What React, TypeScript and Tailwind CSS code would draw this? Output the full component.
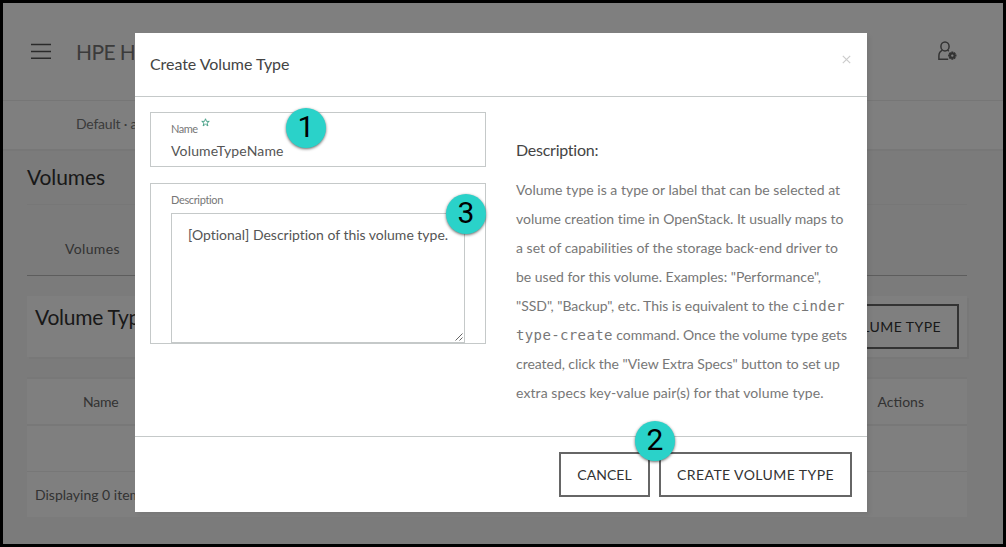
import type { ReactNode } from "react";

const descriptionLines: { text: ReactNode; spacing: string }[] = [
  { text: "Volume type is a type or label that can be selected at", spacing: "tracking-[0.02px]" },
  { text: "volume creation time in OpenStack. It usually maps to", spacing: "tracking-[-0.02px]" },
  { text: "a set of capabilities of the storage back-end driver to", spacing: "tracking-[0.01px]" },
  { text: 'be used for this volume. Examples: "Performance",', spacing: "tracking-[-0.01px]" },
  {
    text: (
      <>
        "SSD", "Backup", etc. This is equivalent to the <Code>cinder</Code>
      </>
    ),
    spacing: "tracking-[-0.033px]",
  },
  {
    text: (
      <>
        <Code>type-create</Code> command. Once the volume type gets
      </>
    ),
    spacing: "tracking-[-0.044px]",
  },
  { text: 'created, click the "View Extra Specs" button to set up', spacing: "tracking-[-0.04px]" },
  { text: "extra specs key-value pair(s) for that volume type.", spacing: "tracking-[0.09px]" },
];

function Code({ children }: { children: ReactNode }) {
  return <code className="font-['DejaVu_Sans_Mono',monospace] text-[14px] leading-none tracking-[0.37px]">{children}</code>;
}

function Badge({ value, place }: { value: number; place: string }) {
  return (
    <span
      className={`absolute z-10 flex size-10 items-center justify-center rounded-full bg-[#2ad2c9] pb-[3px] font-['Roboto',sans-serif] text-[30px] leading-none text-black shadow-[0_1px_3px_rgba(0,0,0,0.6)] ${place}`}
    >
      {value}
    </span>
  );
}

function UserSettingsIcon() {
  return (
    <svg className="h-5 w-[19px]" viewBox="0 0 19 20" fill="none" stroke="#666" strokeWidth="1.5">
      <ellipse cx="7" cy="5.400" rx="4.100" ry="4.500" />
      <path d="M4.400 9.200C2 10.400.9 12.400.9 15v3.300h9.300M9.400 9.200l1.500.9" />
      <circle cx="14.300" cy="14.600" r="2.200" strokeWidth="2" />
      <path
        strokeWidth="2"
        d="M14.300 10.400v1.700M14.300 17.100v1.700M10.100 14.600h1.700M16.800 14.600h1.700M11.400 11.700l1.100 1.100M16.100 16.400l1.100 1.100M11.400 17.500l1.100-1.100M16.100 12.800l1.100-1.100"
      />
    </svg>
  );
}

function Page() {
  return (
    <div className="flex h-full flex-col overflow-hidden whitespace-nowrap bg-[#f6f6f6] text-sm text-[#666]">
      <header className="flex h-[98px] shrink-0 items-center border-b border-[#ececec] bg-white pl-7">
        <svg className="mb-[2px] h-4 w-5" viewBox="0 0 20 16" stroke="#555" strokeWidth="1.4">
          <path d="M0 1.500h20M0 8.500h20M0 15.300h20" />
        </svg>
        <span className="ml-[25px] w-[58px] overflow-hidden text-[21px] leading-8 tracking-[-0.6px] text-[#777]">HPE Helion</span>
        <span className="mb-[2px] ml-auto mr-[46px]">
          <UserSettingsIcon />
        </span>
      </header>
      <div className="h-[50px] shrink-0 border-b-2 border-[#efefef] bg-white pl-[73px] leading-[46px] tracking-[-0.22px] text-[#777]">
        Default · admin
      </div>
      <main className="flex flex-col pl-6 pr-9">
        <h1 className="h-[54px] border-b border-[#eeeeee] text-[21px] leading-[51px] tracking-[-0.1px] text-[#333]">Volumes</h1>
        <nav className="h-[71px] border-b border-[#bbb] pl-[38px] leading-[88px] tracking-[0.35px]">Volumes</nav>
        <section className="mt-5 flex h-[61px] justify-between bg-white pl-2 pr-2 shadow-[2px_2px_0_#f0f0f0]">
          <h2 className="text-[21px] leading-[41px] tracking-[-0.25px] text-[#333]">Volume Types</h2>
          <button className="mt-2 h-[45px] w-[193px] border-2 border-[#666] tracking-[0.42px] text-[#333]">CREATE VOLUME TYPE</button>
        </section>
        <div className="mt-5 flex h-[49px] justify-between border-y-2 border-[#f0f0f0] bg-white pl-14 pr-[43px] leading-[46px]">
          <span className="tracking-[-0.2px]">Name</span>
          <span>Actions</span>
        </div>
        <div className="h-[46px] border-b border-[#efefef] bg-white" />
        <div className="h-[45px] bg-white pl-2 leading-[46px]">Displaying 0 items</div>
      </main>
    </div>
  );
}

function Modal() {
  return (
    <div className="absolute left-[132px] top-[30px] flex h-[479px] w-[732px] flex-col whitespace-nowrap bg-white text-sm text-[#555] shadow-[3px_3px_4px_rgba(0,0,0,0.06)]">
      <header className="flex h-16 justify-between border-b border-[#c5c9c9] pl-[15px] pr-4">
        <h2 className="text-base leading-[62px] tracking-[-0.06px] text-[#444]">Create Volume Type</h2>
        <svg className="mt-[22px] size-[9px]" viewBox="0 0 9 9" stroke="#ccc" strokeWidth="1.2">
          <path d="M.8.8l7.4 7.4M8.2.8L.8 8.2" />
        </svg>
      </header>
      <div className="flex grow pl-[15px]">
        <div className="w-[336px] pt-[15px]">
          <label className="flex h-[55px] flex-col border border-[#c5c9c9] pl-5">
            <span className="flex h-8 text-[11px] leading-[31px] tracking-[-0.5px] text-[#777]">
              Name
              <svg className="ml-[3px] mt-[5px] size-[9px]" viewBox="0 0 24 24" fill="none" stroke="#3d9b80" strokeWidth="2.4">
                <path d="M12 2l2.7 7H22l-5.8 4.6 2.2 7.4L12 16.6 5.6 21l2.2-7.4L2 9h7.300z" />
              </svg>
            </span>
            <span className="leading-[11px] tracking-[0.16px]">VolumeTypeName</span>
          </label>
          <label className="mt-4 flex h-[161px] flex-col border border-[#c5c9c9] pl-5 pr-5">
            <span className="h-[29px] text-[11px] leading-[31px] tracking-[-0.35px] text-[#777]">Description</span>
            <span className="relative h-[130px] border border-[#c5c9c9] pl-4 leading-[41px] tracking-[-0.01px]">
              [Optional] Description of this volume type.
              <svg className="absolute bottom-[1px] right-px size-2" viewBox="0 0 8 8" stroke="#666" strokeWidth="1">
                <path d="M.5 7.5l7-7M4.500 7.500l3-3" />
              </svg>
            </span>
          </label>
        </div>
        <div className="ml-[30px] pt-[43px]">
          <h3 className="text-base leading-[20px] tracking-[-0.25px] text-[#444]">Description:</h3>
          <p className="mt-[15px] text-[#777]">
            {descriptionLines.map((line, i) => (
              <span key={i} className={`block h-[29px] leading-[29px] ${line.spacing}`}>
                {line.text}
              </span>
            ))}
          </p>
        </div>
      </div>
      <footer className="flex h-[76px] shrink-0 justify-end gap-[9px] border-t border-[#c5c9c9] pr-[15px] pt-[15px] text-[#333]">
        <button className="h-[45px] w-[91px] border-2 border-[#666] tracking-[0.02px]">CANCEL</button>
        <button className="h-[45px] w-[193px] border-2 border-[#666] tracking-[0.42px]">CREATE VOLUME TYPE</button>
      </footer>
      <Badge value={1} place="left-[151px] top-[75px]" />
      <Badge value={3} place="left-[311px] top-[161px]" />
      <Badge value={2} place="left-[500px] top-[388px]" />
    </div>
  );
}

export default function App() {
  return (
    <div className="relative h-[547px] w-[1006px] overflow-hidden border-[3px] border-black font-['Lato',sans-serif]">
      <Page />
      <div className="absolute inset-0 bg-black/50" />
      <Modal />
    </div>
  );
}
